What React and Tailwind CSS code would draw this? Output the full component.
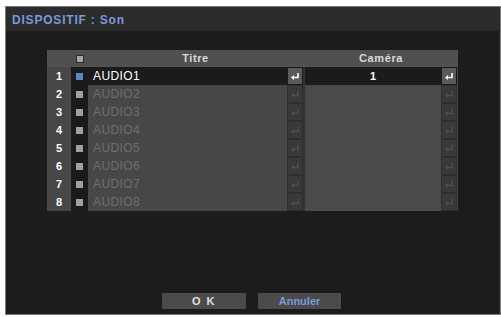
import React from "react";

const rows = [1, 2, 3, 4, 5, 6, 7, 8];

function EnterIcon({ dim }) {
  return (
    <svg width="10" height="9" viewBox="0 0 10 9">
      <path
        d="M8 1 V5.5 H3"
        fill="none"
        stroke={dim ? "#4e4e4e" : "#ffffff"}
        strokeWidth="1.6"
      />
      <path d="M1 5.5 L4 3 V8 Z" fill={dim ? "#4e4e4e" : "#ffffff"} />
    </svg>
  );
}

function EnterCell({ active }) {
  return (
    <div
      className={
        active
          ? "w-[16px] h-[18px] flex items-center justify-center bg-[#5a5a5a] border border-[#1a1a1a]"
          : "w-[16px] h-[18px] flex items-center justify-center bg-[#393939] border border-[#2e2e2e]"
      }
    >
      <EnterIcon dim={!active} />
    </div>
  );
}

export default function App() {
  return (
    <div
      className="w-[501px] h-[317px] bg-white pt-[6px] pl-[5px] overflow-hidden"
      style={{ fontFamily: '"Liberation Sans", Arial, sans-serif' }}
    >
      <div className="w-[496px] h-[309px] border border-[#7a7a7a] bg-[#1c1c1c] flex flex-col">
        {/* barre de titre */}
        <div className="h-[24px] bg-[#2b2b2b] flex items-center pl-[6px] pt-[2px]">
          <span className="text-[12px] font-bold tracking-[0.8px] text-[#7b98dc]">
            DISPOSITIF : Son
          </span>
        </div>

        <div className="flex-1 flex flex-col pl-[41px] pt-[19px] pb-[5px] border-r border-[#2e2e2e]">
          <div className="w-[411px] bg-[#474747] flex flex-col">
            {/* en-tête */}
            <div className="h-[17px] flex items-center bg-[#505050] text-[11px] font-bold tracking-[0.6px] text-[#dadada]">
              <div className="w-[24px]" />
              <div className="w-[17px] flex justify-center">
                <div className="w-[8px] h-[8px] bg-[#a8a8a8] border border-[#2a2a2a]" />
              </div>
              <div className="w-[215px] text-center">Titre</div>
              <div className="w-[2px]" />
              <div className="w-[152px] text-center">Caméra</div>
            </div>

            {rows.map((n) => {
              const active = n === 1;
              return (
                <div key={n} className="h-[18px] flex items-center">
                  <div className="w-[24px] text-center text-[11px] font-bold text-white">
                    {n}
                  </div>
                  <div className="w-[17px] h-[18px] bg-[#1b1b1b] flex items-center justify-center">
                    <div
                      className={
                        active
                          ? "w-[7px] h-[7px] bg-[#5b86c4]"
                          : "w-[7px] h-[7px] bg-[#a0a0a0]"
                      }
                    />
                  </div>
                  <div
                    className={
                      active
                        ? "w-[199px] h-[18px] bg-[#1b1b1b] text-white text-[12px] tracking-[0.4px] pl-[5px] flex items-center"
                        : "w-[199px] h-[18px] bg-[#474747] text-[#6e6e6e] text-[12px] tracking-[0.4px] pl-[5px] flex items-center"
                    }
                  >
                    AUDIO{n}
                  </div>
                  <EnterCell active={active} />
                  <div className="w-[2px] h-[18px] bg-[#333]" />
                  <div
                    className={
                      active
                        ? "w-[136px] h-[18px] bg-[#1b1b1b] text-white text-[11px] font-bold flex items-center justify-center"
                        : "w-[136px] h-[18px] bg-[#4a4a4a]"
                    }
                  >
                    {active ? "1" : ""}
                  </div>
                  <EnterCell active={active} />
                </div>
              );
            })}
          </div>

          <div className="mt-auto flex justify-center gap-[12px] pr-[43px]">
            <button className="w-[84px] h-[16px] bg-[#4b4b4b] text-[11px] font-bold tracking-[1.5px] text-[#e0e0e0] flex items-center justify-center">
              O K
            </button>
            <button className="w-[83px] h-[16px] bg-[#4b4b4b] text-[11px] font-bold text-[#7b98dc] flex items-center justify-center">
              Annuler
            </button>
          </div>
        </div>
      </div>
    </div>
  );
}
